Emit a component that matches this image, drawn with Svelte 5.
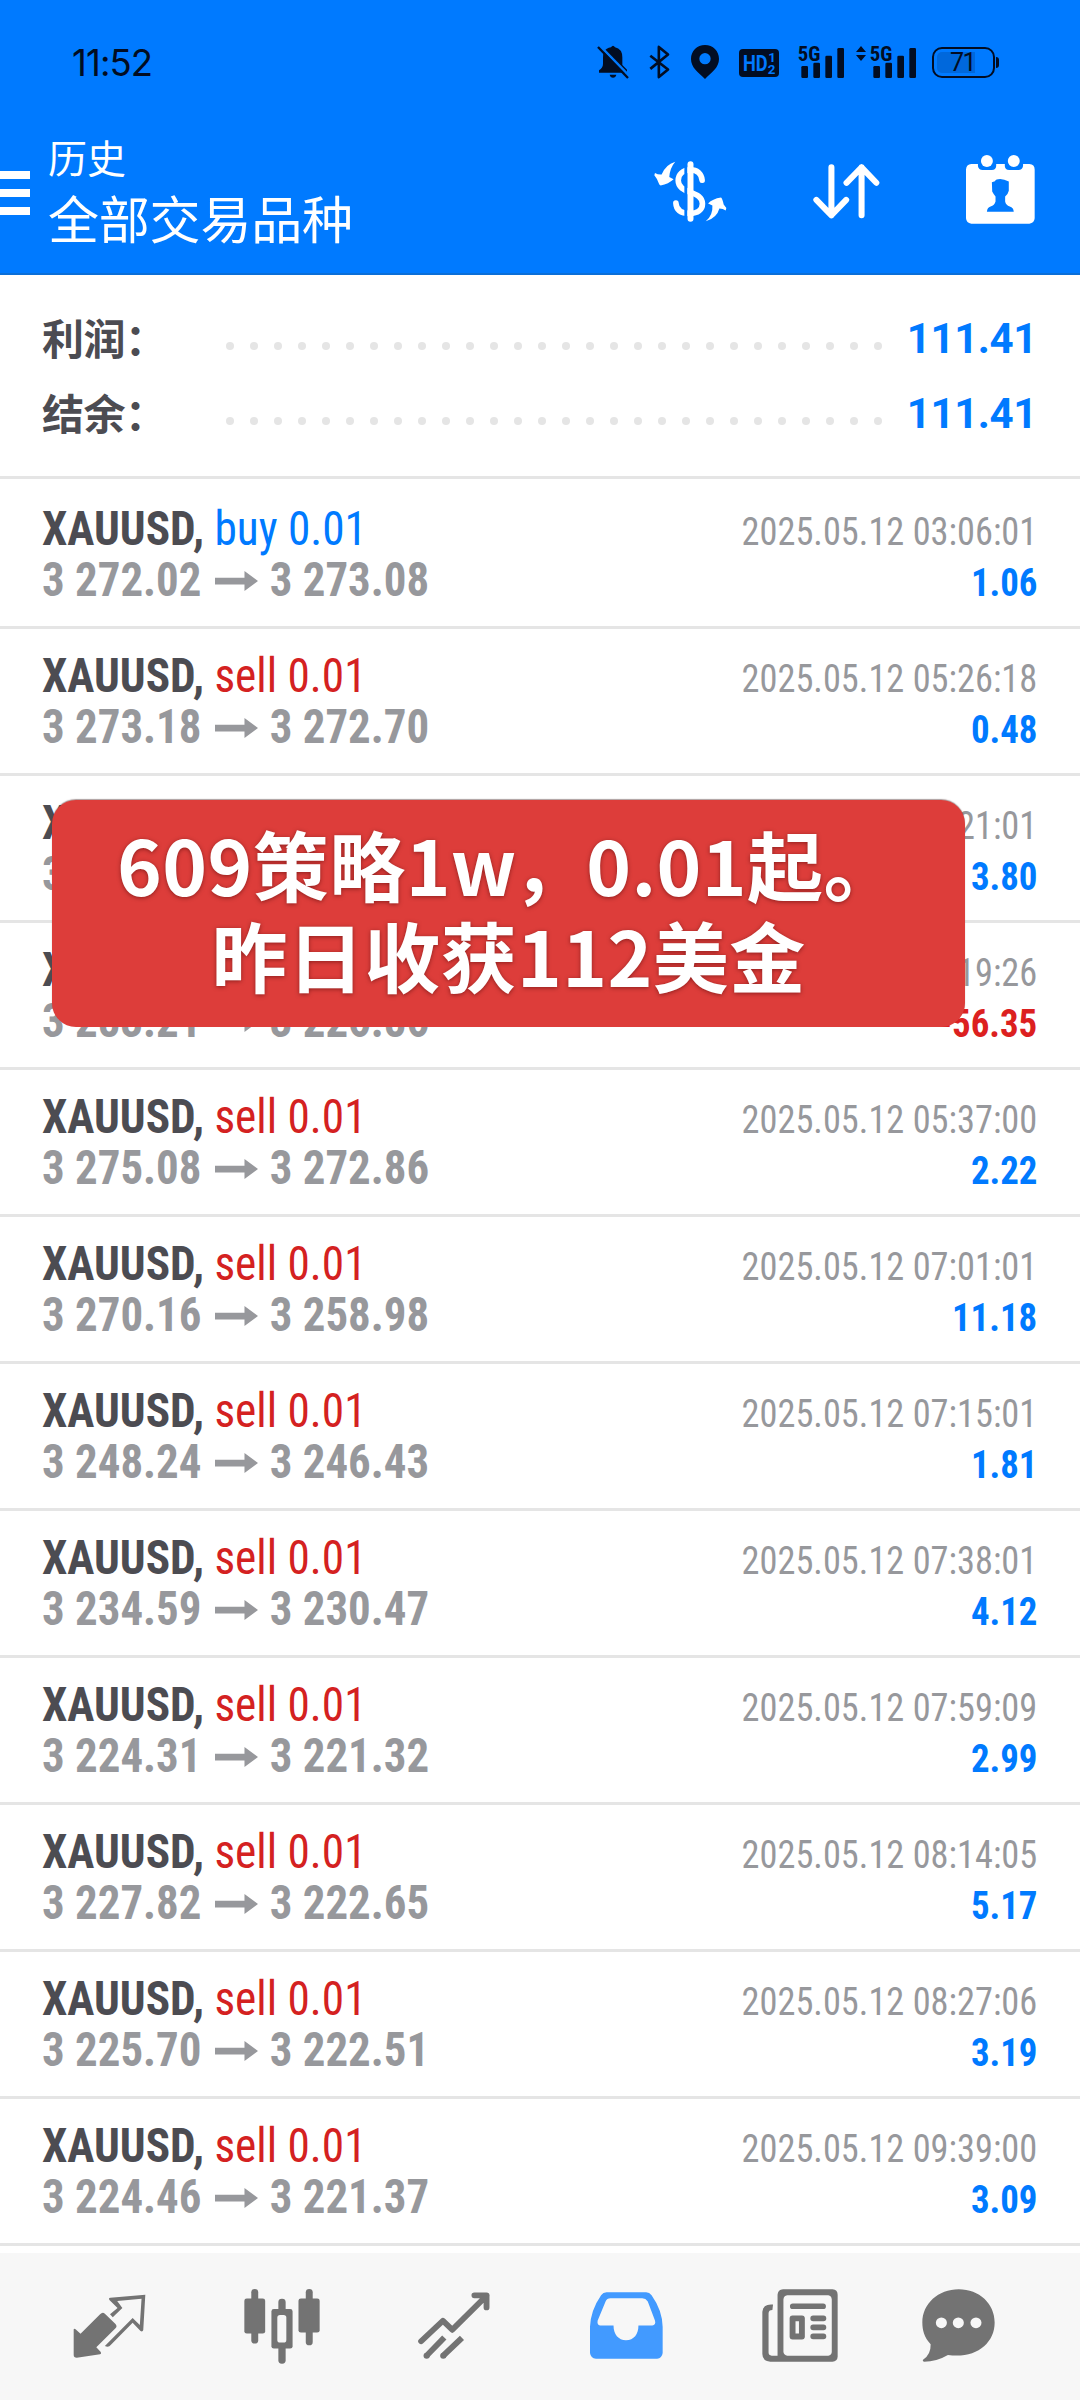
<script>
  const summary = [
    { label: '利润：', value: '111.41' },
    { label: '结余：', value: '111.41' },
  ];

  const deals = [
    { side: 'buy', open: '3 272.02', close: '3 273.08', time: '2025.05.12 03:06:01', profit: '1.06' },
    { side: 'sell', open: '3 273.18', close: '3 272.70', time: '2025.05.12 05:26:18', profit: '0.48' },
    { side: 'sell', open: '3 272.60', close: '3 268.80', time: '2025.05.12 05:21:01', profit: '3.80' },
    { side: 'buy', open: '3 283.21', close: '3 226.86', time: '2025.05.12 07:19:26', profit: '-56.35' },
    { side: 'sell', open: '3 275.08', close: '3 272.86', time: '2025.05.12 05:37:00', profit: '2.22' },
    { side: 'sell', open: '3 270.16', close: '3 258.98', time: '2025.05.12 07:01:01', profit: '11.18' },
    { side: 'sell', open: '3 248.24', close: '3 246.43', time: '2025.05.12 07:15:01', profit: '1.81' },
    { side: 'sell', open: '3 234.59', close: '3 230.47', time: '2025.05.12 07:38:01', profit: '4.12' },
    { side: 'sell', open: '3 224.31', close: '3 221.32', time: '2025.05.12 07:59:09', profit: '2.99' },
    { side: 'sell', open: '3 227.82', close: '3 222.65', time: '2025.05.12 08:14:05', profit: '5.17' },
    { side: 'sell', open: '3 225.70', close: '3 222.51', time: '2025.05.12 08:27:06', profit: '3.19' },
    { side: 'sell', open: '3 224.46', close: '3 221.37', time: '2025.05.12 09:39:00', profit: '3.09' },
  ];

  const dots = Array.from({ length: 28 });
</script>

{#snippet signal()}
  <svg class="signal" viewBox="0 0 138 96">
    <text x="-1" y="44" textLength="68" lengthAdjust="spacingAndGlyphs">5G</text>
    <rect x="10" y="60" width="20" height="36" rx="4" />
    <rect x="46" y="50" width="20" height="46" rx="4" />
    <rect x="82" y="29" width="20" height="67" rx="4" />
    <rect x="118" y="6" width="20" height="90" rx="4" />
  </svg>
{/snippet}

<div class="screen">
  <div class="statusbar">
    <span class="clock">11:52</span>
    <div class="status-icons">
      <svg class="bell" viewBox="0 0 96 102">
        <path d="M20 20 Q28 9 42 7 Q48 -2 54 7 Q77 12 76 40 V60 L90 74 V83 H6 V76 Q18 68 18 56 V38 Q18 30 20 20 Z" />
        <path d="M38 89 H58 Q56 98 48 98 Q40 98 38 89 Z" />
        <path d="M8 2 L98 94" stroke="#007aff" stroke-width="8" />
        <path d="M3 6 L93 99" stroke="#020d22" stroke-width="7" />
      </svg>
      <svg class="bluetooth" viewBox="0 0 64 102">
        <path d="M4 32 L58 74 L30 97 V5 L58 28 L4 72" fill="none" stroke="#020d22" stroke-width="8" stroke-linejoin="round" />
      </svg>
      <svg class="pin" viewBox="0 0 84 102">
        <path fill-rule="evenodd" d="M42 0 C66 0 84 18 84 42 C84 68 62 82 42 102 C22 82 0 68 0 42 C0 18 18 0 42 0 Z M42 24 A17 17 0 1 0 42 58 A17 17 0 1 0 42 24 Z" />
      </svg>
      <svg class="hd" viewBox="0 0 120 84">
        <rect width="120" height="84" rx="12" />
        <text class="cut" x="12" y="66" font-size="66" textLength="74" lengthAdjust="spacingAndGlyphs">HD</text>
        <text class="cut" x="88" y="39" font-size="40">1</text>
        <text class="cut" x="86" y="76" font-size="40">2</text>
      </svg>
      {@render signal()}
      <svg class="updown" viewBox="0 0 30 48">
        <path d="M15 0 L30 18 H0 Z M15 45 L30 27 H0 Z" />
      </svg>
      {@render signal()}
      <div class="battery"><span>71</span></div>
    </div>
  </div>

  <header>
    <div class="menu"><i></i><i></i><i></i></div>
    <div class="titles">
      <div class="title">历史</div>
      <div class="subtitle">全部交易品种</div>
    </div>
    <svg class="currency" viewBox="0 0 220 182">
      <path d="M64 1 Q48 20 46 47 L59 54 Q44 68 20 73 L16 70 Q10 52 1 42 L3 35 Q12 41 23 40 Q34 10 64 1 Z" />
      <path d="M156 181 Q178 162 176 133 L163 127 Q176 113 202 109 Q206 112 210 130 L218 141 L216 148 Q208 142 197 142 Q190 170 156 181 Z" />
      <path d="M145 57 C143 36 129 26 110 26 C86 26 73 40 73 58 C73 78 90 86 108 93 C130 101 146 108 146 128 C146 146 132 157 108 157 C82 157 67 147 66 126" fill="none" stroke="#fff" stroke-width="17" stroke-linecap="round" />
      <path d="M96 0 V182" stroke="#007aff" stroke-width="9" />
      <path d="M110 9 V173" stroke="#fff" stroke-width="18" stroke-linecap="round" />
    </svg>
    <svg class="sort" viewBox="0 0 200 164">
      <path d="M55 10 V153 M10 107 L55 153 L99 107 M145 153 V10 M100 56 L145 10 L189 56" fill="none" stroke="#fff" stroke-width="18" stroke-linecap="round" stroke-linejoin="round" />
    </svg>
    <svg class="calendar" viewBox="0 0 208 208">
      <path fill-rule="evenodd" d="M16 27 H36 V34 Q38 45 50 45 H78 Q90 45 91 33 V27 H117 V34 Q118 45 130 45 H158 Q170 45 172 33 V27 H191 Q207 28 207 44 V191 Q206 206 191 207 H16 Q1 206 0 191 V44 Q1 28 16 27 Z M78 82 L79 110 Q83 118 89 125 V140 Q86 152 74 155 Q64 158 63 171 H144 Q143 158 132 155 Q120 151 118 140 V125 Q127 118 129 108 V80 Q115 72 103 72 Q90 72 87 79 Z" />
      <circle cx="63" cy="18" r="18" />
      <circle cx="144" cy="18" r="18" />
    </svg>
  </header>

  <section class="summary">
    {#each summary as item}
      <div class="total">
        <span class="label">{item.label}</span>
        <div class="dots">
          {#each dots as _}<i></i>{/each}
        </div>
        <span class="value">{item.value}</span>
      </div>
    {/each}
  </section>

  <main>
    {#each deals as deal}
      <div class="deal">
        <div class="line">
          <span class="symbol">XAUUSD, <span class={deal.side}>{deal.side} 0.01</span></span>
          <span class="time">{deal.time}</span>
        </div>
        <div class="line">
          <span class="prices">
            {deal.open}<svg class="arrow" viewBox="0 0 43 20" preserveAspectRatio="none"><path d="M0 6.8 H29.5 V0 L43 10 L29.5 20 V13.4 H0 Z" /></svg>{deal.close}
          </span>
          <span class="profit" class:loss={deal.profit.startsWith('-')}>{deal.profit}</span>
        </div>
      </div>
    {/each}

    <div class="banner">
      <div>609策略1w<span class="comma">，</span>0.01起。</div>
      <div>昨日收获112美金</div>
    </div>
  </main>

  <nav>
    <svg class="quotes" viewBox="0 0 213 192" preserveAspectRatio="none">
      <path d="M2 106 Q4 102 9 107 L22 119 L79 61 Q86 53 93 59 L124 90 Q130 97 124 103 L68 160 L81 174 Q84 179 79 181 L11 191 Q2 191 2 183 Z" />
      <path d="M105 15 Q105 11 109 11 L211 2 L205 108 Q203 115 197 111 L174 86 L110 153 Q104 162 93 156 L174 72 L195 93 L200 14 L129 21 L144 42 L116 70 L108 61 L130 42 L107 19 Z" />
    </svg>
    <svg class="charts" viewBox="0 0 219 224" preserveAspectRatio="none">
      <rect x="21" y="0" width="20" height="163" rx="10" />
      <rect x="1" y="28" width="60" height="105" rx="7" />
      <rect x="99" y="29" width="21" height="194" rx="10" />
      <rect x="79" y="60" width="61" height="118" rx="7" />
      <rect x="96" y="78" width="26" height="82" rx="8" fill="#f7f7f7" />
      <rect x="178" y="0" width="20" height="168" rx="10" />
      <rect x="157" y="28" width="61" height="102" rx="7" />
    </svg>
    <svg class="trade" viewBox="0 0 208 200" preserveAspectRatio="none">
      <g fill="none" stroke="#737373" stroke-width="17" stroke-linejoin="round">
        <path d="M9 147 L72 86 L99 113 L198 11 M163 10 H198 V46" stroke-linecap="round" />
        <path d="M25 190 L76 136 M73 190 L127 137" />
      </g>
      <circle cx="25" cy="190" r="9" />
      <circle cx="73" cy="190" r="9" />
    </svg>
    <svg class="history" viewBox="0 0 211 200" preserveAspectRatio="none">
      <path fill-rule="evenodd" d="M48 1 H162 Q172 1 178 10 Q209 55 210 104 V182 Q208 198 194 199 H17 Q2 198 0 182 V104 Q2 55 32 10 Q38 1 48 1 Z M59 19 Q49 19 45 28 L22 86 Q20 99 29 100 H68 C68 126 82 144 104 144 C127 144 140 126 140 100 H180 Q191 99 188 86 L167 28 Q161 19 151 19 Z" />
    </svg>
    <svg class="news" viewBox="0 0 220 218" preserveAspectRatio="none">
      <path fill-rule="evenodd" d="M61 1 H204 Q219 2 219 17 V202 Q218 216 204 217 H24 Q2 216 1 194 V68 Q3 46 26 46 H32 L30 63 Q19 63 19 73 V190 Q19 199 28 199 H45 V17 Q46 2 61 1 Z M73 19 Q63 20 62 31 V188 Q64 198 73 199 H192 Q201 198 202 188 V31 Q201 20 192 19 Z" />
      <rect x="81" y="43" width="104" height="17" rx="8" />
      <path fill-rule="evenodd" d="M88 79 H116 Q123 79 124 86 V144 Q123 151 116 151 H88 Q81 151 80 144 V86 Q81 79 88 79 Z M97 96 V133 H107 V96 Z" />
      <rect x="140" y="79" width="46" height="17" rx="8" />
      <rect x="140" y="106" width="46" height="17" rx="8" />
      <rect x="140" y="133" width="46" height="17" rx="8" />
    </svg>
    <svg class="messages" viewBox="0 0 211 218" preserveAspectRatio="none">
      <path d="M106 1 C166 1 210 44 210 100 C210 164 154 209 75 197 Q42 217 6 217 Q0 215 3 211 Q26 196 25 165 C6 144 1 122 1 100 C1 44 47 1 106 1 Z" />
      <circle cx="56" cy="101" r="16" fill="#f7f7f7" />
      <circle cx="105" cy="101" r="16" fill="#f7f7f7" />
      <circle cx="156" cy="101" r="16" fill="#f7f7f7" />
    </svg>
  </nav>
</div>

<style>
  :global(body) {
    margin: 0;
    background: #fff;
  }

  .screen {
    width: 1080px;
    height: 2400px;
    display: flex;
    flex-direction: column;
    overflow: hidden;
    font-family: Roboto, 'Noto Sans CJK SC', sans-serif;
  }

  svg {
    display: block;
    flex: none;
  }

  .statusbar {
    height: 124px;
    box-sizing: border-box;
    padding: 0 85px 0 72px;
    display: flex;
    align-items: center;
    justify-content: space-between;
    background: #007aff;
    color: #020d22;
  }

  .clock {
    font-family: Inter, sans-serif;
    font-size: 36.5px;
    letter-spacing: -0.9px;
    margin-top: 1px;
  }

  .status-icons {
    display: flex;
    align-items: center;
    fill: #020d22;
  }

  .bell { width: 32px; height: 34px; margin-right: 20px; margin-left: -1px; }
  .bluetooth { width: 21px; height: 34px; margin-right: 21px; }
  .pin { width: 28px; height: 34px; margin-right: 20px; }
  .hd { width: 40px; height: 28px; margin: 2px 19px 0 0; }
  .hd .cut { fill: #007aff; font-weight: 700; }
  .signal { width: 46px; height: 32px; overflow: visible; }
  .signal text { font-size: 62px; font-weight: 700; font-family: 'Roboto Condensed', Roboto, sans-serif; }
  .updown { width: 10px; height: 16px; margin: 0 4px 17px 12px; }

  .battery {
    position: relative;
    width: 63px;
    height: 31px;
    box-sizing: border-box;
    margin-left: 16px;
    border: 2.5px solid #020d22;
    border-radius: 10px;
    padding: 3px;
    font-size: 25px;
    line-height: 21px;
  }

  .battery span {
    display: block;
    width: 38px;
    box-sizing: border-box;
    padding-left: 13px;
    border-radius: 5px 0 0 5px;
    background: #0068dc;
    letter-spacing: -1.5px;
  }

  .battery::after {
    content: '';
    position: absolute;
    right: -6px;
    top: 8px;
    width: 3px;
    height: 11px;
    border-radius: 0 3px 3px 0;
    background: #020d22;
  }

  header {
    height: 151px;
    box-sizing: border-box;
    padding-right: 45px;
    border-bottom: 2px solid #0b6fd8;
    display: flex;
    align-items: flex-start;
    background: #007aff;
    color: #fff;
    fill: #fff;
  }

  .menu {
    display: flex;
    flex-direction: column;
    gap: 10px;
    margin-top: 47px;
  }

  .menu i {
    width: 30px;
    height: 8px;
    background: #fff;
  }

  .titles {
    flex: 1;
    margin: 7px 0 0 18px;
    font-family: 'Noto Sans CJK SC', sans-serif;
  }

  .title {
    font-size: 39px;
    line-height: 50px;
  }

  .subtitle {
    margin-top: 6px;
    font-size: 51px;
    line-height: 60px;
    letter-spacing: -0.2px;
  }

  .currency { width: 73px; height: 61px; margin-top: 37px; }
  .sort { width: 67px; height: 55px; margin: 40px 0 0 86px; }
  .calendar { width: 69px; height: 69px; margin: 31px 0 0 86px; }

  .summary {
    padding: 24px 43px 27px 42px;
    border-bottom: 3px solid #e5e5e5;
  }

  .total {
    height: 75px;
    display: flex;
    align-items: center;
  }

  .label {
    width: 184px;
    font: 700 42px/75px 'Noto Sans CJK SC', sans-serif;
    letter-spacing: -0.5px;
    color: #4c4c52;
  }

  .dots {
    display: flex;
    justify-content: space-between;
    width: 656px;
    margin-top: 19px;
  }

  .dots i {
    width: 8px;
    height: 8px;
    border-radius: 50%;
    background: #e5e5e5;
  }

  .value {
    margin: 4px 0 0 auto;
    font-size: 42px;
    font-weight: 700;
    letter-spacing: -0.4px;
    color: #007aff;
  }

  main {
    position: relative;
    height: 1774px;
    padding-top: 3px;
    box-sizing: border-box;
    font-family: 'Roboto Condensed', sans-serif;
  }

  .deal {
    height: 147px;
    box-sizing: border-box;
    padding: 21px 43px 0 42px;
    border-bottom: 3px solid #e5e5e5;
  }

  .line {
    height: 51px;
    display: flex;
    justify-content: space-between;
    align-items: baseline;
    line-height: 51px;
    white-space: nowrap;
  }

  .symbol,
  .prices {
    font-size: 48px;
    font-weight: 700;
    color: #4c4c52;
    transform: scaleX(0.943);
    transform-origin: left;
  }

  .prices {
    color: #97989c;
    transform: scaleX(0.935);
  }

  .buy,
  .sell {
    font-weight: 400;
    color: #007aff;
  }

  .sell {
    color: #d42121;
  }

  .arrow {
    display: inline-block;
    width: 46px;
    height: 20px;
    margin: 0 13px 5px 14px;
    fill: #97989c;
  }

  .time,
  .profit {
    font-size: 39px;
    color: #97989c;
    transform: scaleX(0.932);
    transform-origin: right;
  }

  .profit {
    font-weight: 700;
    color: #007aff;
    transform: scaleX(0.945);
  }

  .profit.loss {
    color: #dc2020;
  }

  .banner {
    position: absolute;
    left: 52px;
    top: 321px;
    width: 913px;
    height: 227px;
    box-sizing: border-box;
    padding-top: 18px;
    border-radius: 24px;
    background: #dd3d3a;
    box-shadow: 0 -1px 1px rgba(90, 60, 60, 0.5);
    color: #fff;
    font: 700 76px/91px 'Noto Sans CJK SC', sans-serif;
    letter-spacing: 0.4px;
    text-align: center;
    text-shadow: 0 1px 4px rgba(60, 0, 0, 0.5);
  }

  .comma {
    margin: 0 -3px 0 -4px;
  }

  nav {
    height: 147px;
    box-sizing: border-box;
    padding-left: 73px;
    display: flex;
    align-items: flex-start;
    background: #f7f7f7;
    fill: #737373;
  }

  .quotes { width: 73px; height: 64px; margin-top: 41px; }
  .charts { width: 76px; height: 75px; margin: 36px 0 0 98px; }
  .trade { width: 72px; height: 67px; margin: 39px 0 0 98px; }
  .history { width: 73px; height: 67px; margin: 39px 0 0 100px; fill: #429aff; }
  .news { width: 76px; height: 73px; margin: 36px 0 0 99px; }
  .messages { width: 73px; height: 73px; margin: 36px 0 0 84px; }
</style>
